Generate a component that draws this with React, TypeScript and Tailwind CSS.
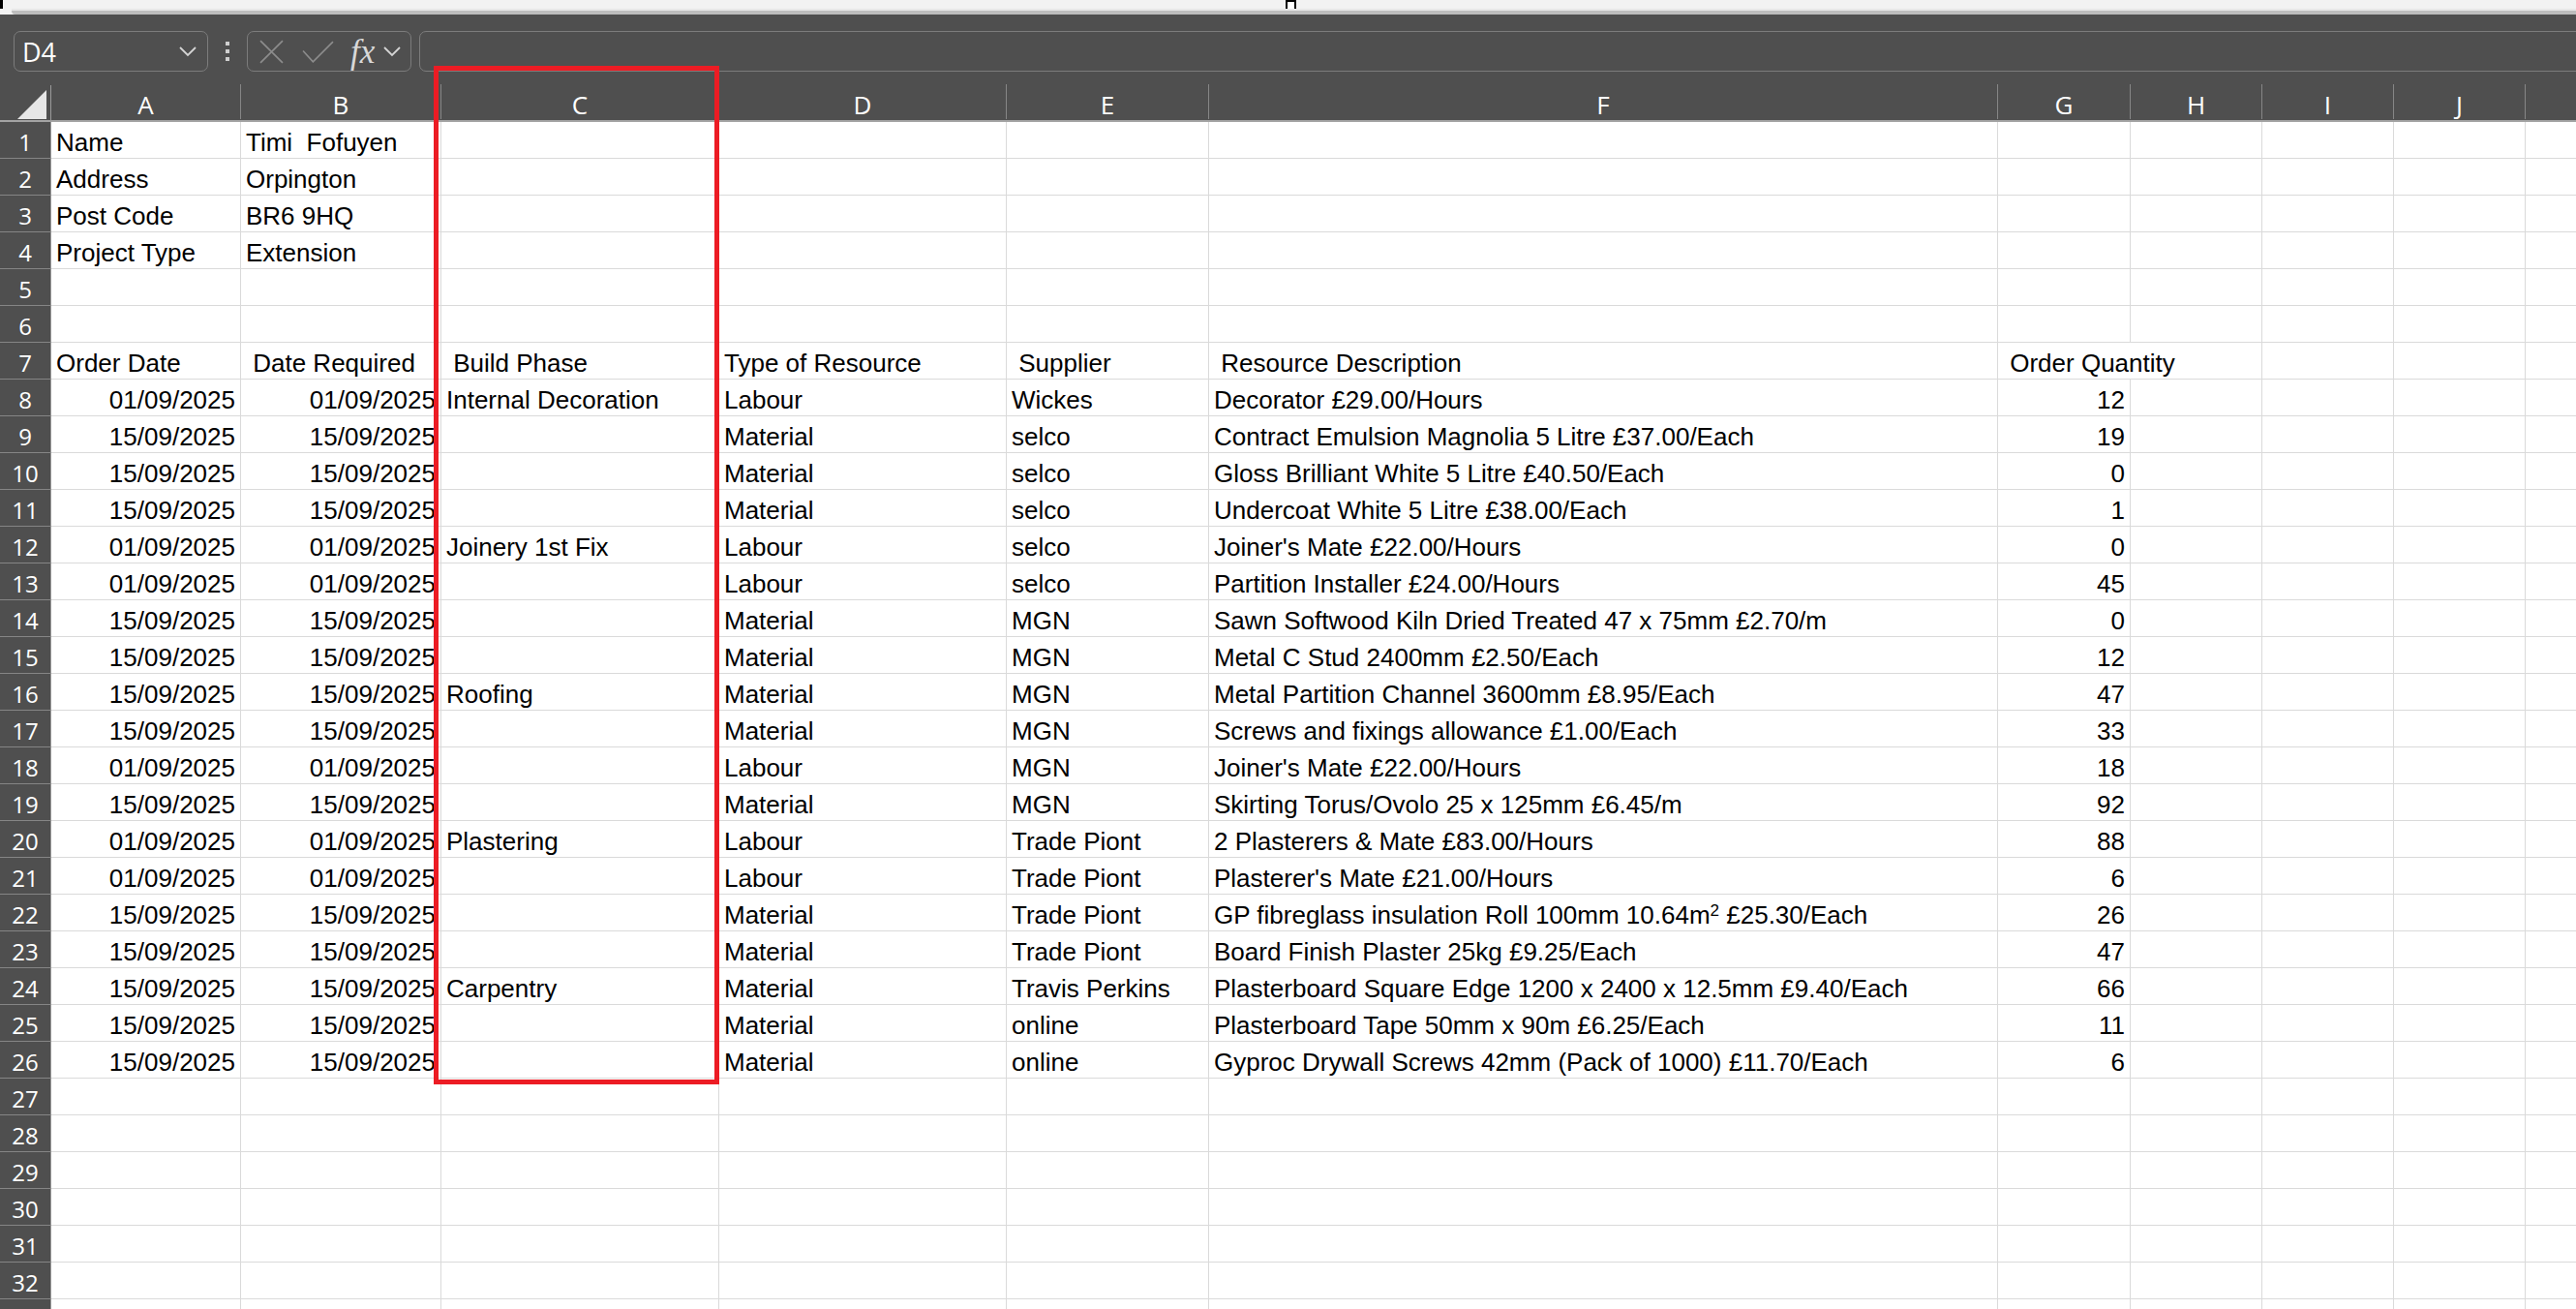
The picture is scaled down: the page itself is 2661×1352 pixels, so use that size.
import type { ReactNode } from 'react';

const GRID =
  'grid w-max grid-cols-[53px_196px_207px_287px_297px_209px_815px_137px_136px_136px_136px_136px]';
const LETTERS = ['A', 'B', 'C', 'D', 'E', 'F', 'G', 'H', 'I', 'J', 'K'];

type Cell = ReactNode;

const d1 = '01/09/2025';
const d15 = '15/09/2025';

// rows 1..26, columns A..G
const DATA: Cell[][] = [
  ['Name', 'Timi  Fofuyen'],
  ['Address', 'Orpington'],
  ['Post Code', 'BR6 9HQ'],
  ['Project Type', 'Extension'],
  [],
  [],
  ['Order Date', ' Date Required', ' Build Phase', 'Type of Resource', ' Supplier', ' Resource Description', ' Order Quantity'],
  [d1, d1, 'Internal Decoration', 'Labour', 'Wickes', 'Decorator £29.00/Hours', '12'],
  [d15, d15, '', 'Material', 'selco', 'Contract Emulsion Magnolia 5 Litre £37.00/Each', '19'],
  [d15, d15, '', 'Material', 'selco', 'Gloss Brilliant White 5 Litre £40.50/Each', '0'],
  [d15, d15, '', 'Material', 'selco', 'Undercoat White 5 Litre £38.00/Each', '1'],
  [d1, d1, 'Joinery 1st Fix', 'Labour', 'selco', "Joiner's Mate £22.00/Hours", '0'],
  [d1, d1, '', 'Labour', 'selco', 'Partition Installer £24.00/Hours', '45'],
  [d15, d15, '', 'Material', 'MGN', 'Sawn Softwood Kiln Dried Treated 47 x 75mm £2.70/m', '0'],
  [d15, d15, '', 'Material', 'MGN', 'Metal C Stud 2400mm £2.50/Each', '12'],
  [d15, d15, 'Roofing', 'Material', 'MGN', 'Metal Partition Channel 3600mm £8.95/Each', '47'],
  [d15, d15, '', 'Material', 'MGN', 'Screws and fixings allowance £1.00/Each', '33'],
  [d1, d1, '', 'Labour', 'MGN', "Joiner's Mate £22.00/Hours", '18'],
  [d15, d15, '', 'Material', 'MGN', 'Skirting Torus/Ovolo 25 x 125mm £6.45/m', '92'],
  [d1, d1, 'Plastering', 'Labour', 'Trade Piont', '2 Plasterers & Mate £83.00/Hours', '88'],
  [d1, d1, '', 'Labour', 'Trade Piont', "Plasterer's Mate £21.00/Hours", '6'],
  [
    d15,
    d15,
    '',
    'Material',
    'Trade Piont',
    <>
      GP fibreglass insulation Roll 100mm 10.64m<sup className="text-[17px]">2</sup> £25.30/Each
    </>,
    '26',
  ],
  [d15, d15, '', 'Material', 'Trade Piont', 'Board Finish Plaster 25kg £9.25/Each', '47'],
  [d15, d15, 'Carpentry', 'Material', 'Travis Perkins', 'Plasterboard Square Edge 1200 x 2400 x 12.5mm £9.40/Each', '66'],
  [d15, d15, '', 'Material', 'online', 'Plasterboard Tape 50mm x 90m £6.25/Each', '11'],
  [d15, d15, '', 'Material', 'online', 'Gyproc Drywall Screws 42mm (Pack of 1000) £11.70/Each', '6'],
];

const TOTAL_ROWS = 33;

const isNumeric = (v: Cell) => typeof v === 'string' && /^[\d/]+$/.test(v);

function Chevron({ className }: { className?: string }) {
  return (
    <svg viewBox="0 0 20 12" className={className} fill="none">
      <polyline points="2,2 10,10 18,2" stroke="#d4d4d4" strokeWidth="1.8" />
    </svg>
  );
}

function Toolbar() {
  return (
    <div className="flex h-[73px] items-start overflow-hidden bg-[#4f4f4f] pt-[17px]">
      <div className="ml-[14px] flex h-[42px] w-[201px] shrink-0 items-center justify-between rounded-[7px] border border-[#7c7c7c] pl-[8px] pr-[10px]">
        <span className="text-[27px] leading-none text-white" style={{ fontFamily: '"Open Sans", sans-serif' }}>
          D4
        </span>
        <Chevron className="h-[12px] w-[20px]" />
      </div>
      <div className="mx-[18px] flex h-[42px] w-[4px] shrink-0 flex-col justify-center gap-[4px]">
        <span className="block h-[4px] w-[4px] bg-[#cfcfcf]" />
        <span className="block h-[4px] w-[4px] bg-[#cfcfcf]" />
        <span className="block h-[4px] w-[4px] bg-[#cfcfcf]" />
      </div>
      <div className="flex h-[42px] w-[170px] shrink-0 items-center rounded-[7px] border border-[#7c7c7c] pl-[12px]">
        <svg viewBox="0 0 24 24" className="h-[25px] w-[25px] shrink-0" fill="none">
          <path d="M1 1 L23 23 M23 1 L1 23" stroke="#8c8c8c" strokeWidth="1.6" />
        </svg>
        <svg viewBox="0 0 32 22" className="ml-[19px] h-[23px] w-[33px] shrink-0" fill="none">
          <polyline points="1,10 11,21 31,1" stroke="#8c8c8c" strokeWidth="1.6" />
        </svg>
        <span
          className="ml-[17px] text-[35px] italic leading-none text-[#d8d8d8]"
          style={{ fontFamily: '"Liberation Serif", serif' }}
        >
          fx
        </span>
        <Chevron className="ml-[8px] h-[12px] w-[20px] shrink-0" />
      </div>
      <div className="ml-[8px] h-[42px] w-[2260px] shrink-0 rounded-[7px] border border-[#7c7c7c]" />
    </div>
  );
}

function HeaderRow() {
  return (
    <div className={GRID}>
      <div className="relative h-[38px] border-r border-b-2 border-r-[#9a9a9a] border-b-[#a3a3a3] bg-[#4f4f4f]">
        <svg viewBox="0 0 30 30" className="absolute left-[18px] top-[5px] h-[30px] w-[30px]">
          <polygon points="30,0 30,30 0,30" fill="#e6e6e6" />
        </svg>
      </div>
      {LETTERS.map((l) => (
        <div
          key={l}
          className="flex h-[38px] items-end justify-center border-b-2 border-b-[#a3a3a3] bg-[#4f4f4f] pb-[1px]"
        >
          <div
            className="flex h-[36px] w-full items-center justify-center border-r border-[#868686] pt-[6px] text-[26px] text-white"
            style={{ fontFamily: '"Open Sans", sans-serif' }}
          >
            {l}
          </div>
        </div>
      ))}
    </div>
  );
}

function DataRow({ index }: { index: number }) {
  const cells = DATA[index - 1] ?? [];
  const spanG = index === 7;
  const cols = spanG ? 10 : 11;
  return (
    <div className={GRID}>
      <div
        className="flex h-[38px] items-center justify-center border-r border-b border-r-[#9a9a9a] border-b-[#858585] bg-[#4f4f4f] pt-[5px] text-[24px] text-white"
        style={{ fontFamily: '"Open Sans", sans-serif' }}
      >
        {index}
      </div>
      {Array.from({ length: cols }, (_, c) => {
        const v = cells[c] ?? '';
        const right = isNumeric(v);
        return (
          <div
            key={c}
            className={
              'h-[38px] overflow-visible whitespace-pre border-r border-b border-[#dadada] px-[5px] pt-[3px] text-[26px] leading-[36px] text-black ' +
              (right ? 'text-right ' : 'text-left ') +
              (spanG && c === 6 ? 'col-span-2' : '')
            }
          >
            {v}
          </div>
        );
      })}
    </div>
  );
}

export default function App() {
  return (
    <div
      className="relative h-screen w-full overflow-hidden bg-white"
      style={{ fontFamily: '"Liberation Sans", Arial, sans-serif' }}
    >
      {/* window top strip */}
      <div className="relative h-[15px] bg-[#f2f2f2]">
        <div className="absolute left-0 top-0 h-[9px] w-[3px] bg-black" />
        <div className="absolute left-[1328px] top-0 h-[11px] w-[11px] border-2 border-black bg-white" />
        <div className="absolute bottom-0 left-[12px] right-0 h-[4px] rounded-bl-[4px] bg-[#bdbdbd]" />
        <div className="absolute bottom-[4px] left-[12px] right-0 h-[2px] bg-[#e7e7e7]" />
      </div>
      <Toolbar />
      <div className="w-max">
        <HeaderRow />
        {Array.from({ length: TOTAL_ROWS }, (_, i) => (
          <DataRow key={i} index={i + 1} />
        ))}
      </div>
      {/* highlight box drawn over column C */}
      <div className="pointer-events-none absolute left-[448px] top-[68px] h-[1052px] w-[295px] border-[5px] border-[#ec1c24]" />
    </div>
  );
}
